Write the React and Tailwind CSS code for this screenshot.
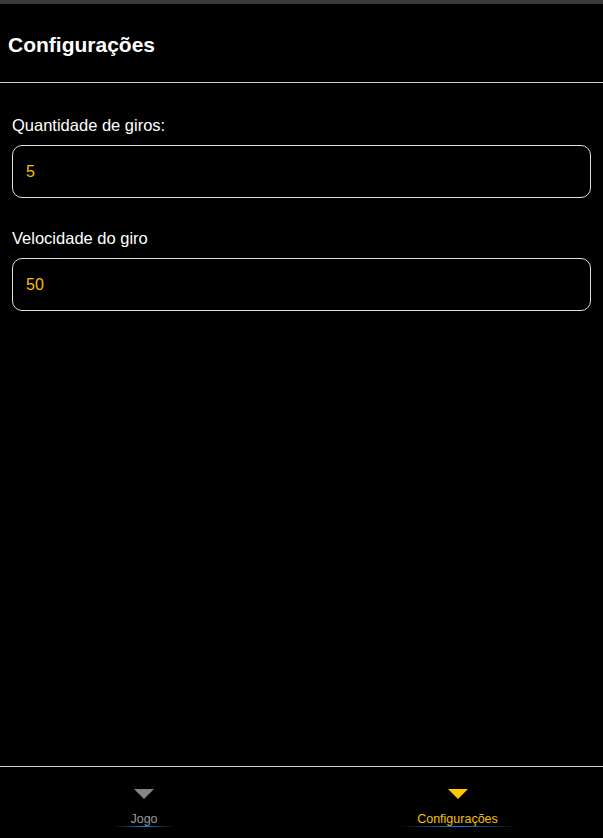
import React, { useState } from "react";

const font = { fontFamily: '"Liberation Sans", Arial, sans-serif' };

const Triangle = ({ color }) => (
  <svg width="20" height="10" viewBox="0 0 20 10">
    <polygon points="0,0 20,0 10,10" fill={color} />
  </svg>
);

const Field = ({ label, value, onChange }) => (
  <div className="flex flex-col">
    <label className="text-[16.5px] text-white leading-[20px] mb-[10px]">{label}</label>
    <input
      value={value}
      onChange={(e) => onChange(e.target.value)}
      className="h-[53px] w-full rounded-[10px] border border-[#e0e0e0] bg-black px-[13px] text-[16px] text-[#f5c000] outline-none"
    />
  </div>
);

export default function App() {
  const [spins, setSpins] = useState("5");
  const [speed, setSpeed] = useState("50");
  const [tab, setTab] = useState("config");

  return (
    <div className="h-[838px] w-[603px] bg-black flex flex-col" style={font}>
      <div className="h-[4px] bg-[#3a3a3a]" />
      <header className="h-[79px] flex items-center px-[8px] pt-[4px] border-b border-[#d0d0d0]">
        <h1 className="text-[21px] font-bold text-white">Configurações</h1>
      </header>

      <main className="flex-1 px-[12px] pt-[32px] flex flex-col gap-[30px]">
        <Field label="Quantidade de giros:" value={spins} onChange={setSpins} />
        <Field label="Velocidade do giro" value={speed} onChange={setSpeed} />
      </main>

      <nav className="h-[72px] border-t border-[#d0d0d0] flex">
        {[
          { id: "jogo", label: "Jogo", cls: "w-[288px]", line: "w-[60px]" },
          { id: "config", label: "Configurações", cls: "flex-1 pl-[24px]", line: "w-[120px]" },
        ].map((t) => {
          const active = tab === t.id;
          return (
            <button
              key={t.id}
              onClick={() => setTab(t.id)}
              className={`flex flex-col items-center pt-[22px] ${t.cls}`}
            >
              <Triangle color={active ? "#ffc800" : "#858585"} />
              <span
                className={`mt-[13px] text-[12.5px] leading-[14px] ${active ? "text-[#f5c000]" : "text-[#9a9a9a]"}`}
              >
                {t.label}
              </span>
              <span className={`h-[1px] ${t.line} bg-gradient-to-r from-transparent via-[#1e7fe0] to-transparent`} />
            </button>
          );
        })}
      </nav>
    </div>
  );
}
